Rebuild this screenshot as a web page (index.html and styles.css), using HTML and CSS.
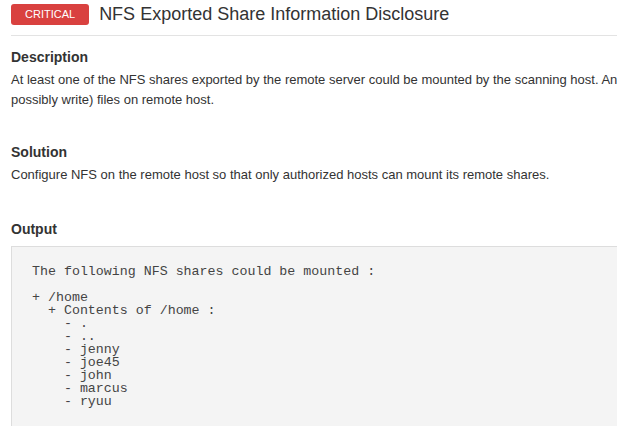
FILE: index.html
```html
<!DOCTYPE html>
<html>
<head>
<meta charset="utf-8">
<link rel="stylesheet" href="styles.css">
</head>
<body>
<div class="page">
  <div class="header">
    <span class="badge">CRITICAL</span>
    <h1 class="title">NFS Exported Share Information Disclosure</h1>
  </div>
  <section class="section">
    <h2 class="heading">Description</h2>
    <p class="text">At least one of the NFS shares exported by the remote server could be mounted by the scanning host. An attacker may be able to leverage this to read (and possibly write) files on remote host.</p>
  </section>
  <section class="section">
    <h2 class="heading">Solution</h2>
    <p class="text">Configure NFS on the remote host so that only authorized hosts can mount its remote shares.</p>
  </section>
  <section class="section section-output">
    <h2 class="heading">Output</h2>
<pre class="output">The following NFS shares could be mounted :

+ /home
  + Contents of /home :
    - .
    - ..
    - jenny
    - joe45
    - john
    - marcus
    - ryuu

</pre>
  </section>
</div>
</body>
</html>
```

FILE: styles.css
```css
html, body {
  margin: 0;
  padding: 0;
  background: #fff;
  overflow: hidden;
}
body {
  font-family: "Liberation Sans", Arial, sans-serif;
  color: #333;
}
.page {
  width: 912px;
  padding: 0 0 0 11px;
}
.header {
  display: flex;
  align-items: center;
  gap: 10px;
  padding: 4px 0 10px;
  border-bottom: 1px solid #e3e3e3;
}
.badge {
  display: inline-block;
  background: #d9413f;
  color: #fff;
  font-size: 11px;
  line-height: 21px;
  padding: 0 14px;
  border-radius: 3px;
}
.title {
  margin: 0;
  font-size: 18px;
  font-weight: normal;
  line-height: 21px;
  color: #333;
}
.section {
  margin-top: 9px;
}
.heading {
  margin: 0;
  font-size: 14px;
  font-weight: bold;
  line-height: 25px;
}
.text {
  margin: 0;
  font-size: 13px;
  line-height: 20px;
}
.section + .section {
  margin-top: 30px;
}
.section + .section-output {
  margin-top: 32px;
}
.output {
  margin: 4px 0 0;
  background: #f4f4f4;
  border: 1px solid #ddd;
  padding: 18px 20px;
  font-family: "Liberation Mono", "Courier New", monospace;
  font-size: 13.3px;
  line-height: 13px;
  color: #444;
}
```
